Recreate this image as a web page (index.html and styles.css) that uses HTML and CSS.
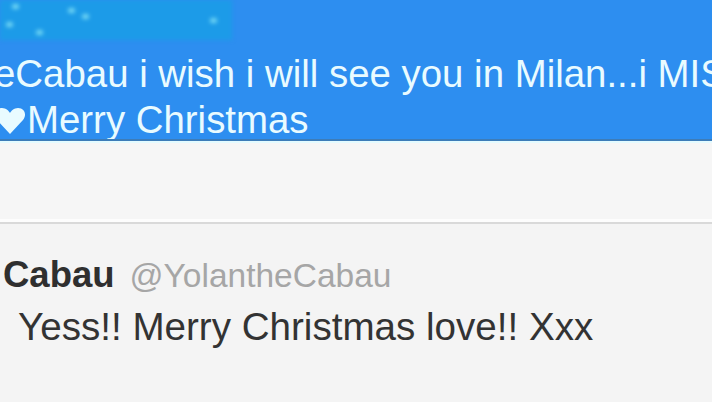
FILE: index.html
```html
<!DOCTYPE html>
<html>
<head>
<meta charset="utf-8">
<link rel="stylesheet" href="styles.css">
</head>
<body>
<div class="page">
  <div class="highlight">
    <div class="scribble">
      <span class="dot d1"></span><span class="dot d2"></span><span class="dot d3"></span>
      <span class="dot d4"></span><span class="dot d5"></span><span class="dot d6"></span>
    </div>
    <div class="hl-text">
      <div class="line l1">eCabau i wish i will see you in Milan...i MISS</div>
      <div class="line l2"><svg class="heart" viewBox="0 0 32 28" width="32" height="28"><path d="M16 27 L3 13 C-1 8 1 1 8 1 C12 1 15 4 16 6 C17 4 20 1 24 1 C31 1 33 8 29 13 Z" fill="#e9fbff"/></svg>Merry Christmas</div>
    </div>
  </div>
  <div class="gap"></div>
  <div class="reply">
    <div class="reply-head"><span class="name">Cabau</span><span class="handle">@YolantheCabau</span></div>
    <div class="reply-text">Yess!! Merry Christmas love!! Xxx</div>
  </div>
</div>
</body>
</html>
```
FILE: styles.css
```css
html, body {
  margin: 0;
  padding: 0;
  width: 712px;
  height: 402px;
  overflow: hidden;
  background: #f4f4f4;
}
.page {
  display: flex;
  flex-direction: column;
  font-family: "Liberation Sans", Arial, sans-serif;
}
.highlight {
  background: #2d8ef0;
  height: 139px;
  border-bottom: 2px solid #3d7cb8;
  box-shadow: 0 2px 0 #e4fbff;
  position: relative;
  overflow: hidden;
}
.scribble {
  position: absolute;
  left: 0;
  top: 0;
  width: 232px;
  height: 40px;
  background: #1c9be8;
  filter: blur(2px);
}
.dot {
  position: absolute;
  width: 7px;
  height: 5px;
  border-radius: 50%;
  background: #7fe0f6;
}
.d1 { left: 12px; top: 4px; }
.d2 { left: 68px; top: 8px; }
.d3 { left: 82px; top: 14px; }
.d4 { left: 6px; top: 22px; }
.d5 { left: 36px; top: 30px; }
.d6 { left: 210px; top: 18px; }
.hl-text {
  padding-top: 51px;
  color: #e9fbff;
  font-size: 38.4px;
  line-height: 46px;
  white-space: nowrap;
}
.line { display: flex; align-items: center; }
.l1 { margin-left: -6px; }
.heart { margin-left: -6px; margin-right: 1px; margin-top: 2px; }
.gap {
  height: 81px;
  background: #f6f6f6;
  border-bottom: 2px solid #d9d9d9;
  box-shadow: 0 -3px 0 #fdfdfd inset;
}
.reply {
  padding-top: 30px;
  background: #f4f4f4;
}
.reply-head {
  display: flex;
  align-items: baseline;
  gap: 15px;
  padding-left: 3px;
  white-space: nowrap;
}
.name {
  font-weight: bold;
  font-size: 36.5px;
  color: #2f2f2f;
}
.handle {
  font-size: 33.5px;
  color: #a6a6a6;
}
.reply-text {
  margin-top: 9px;
  padding-left: 18px;
  font-size: 38.6px;
  color: #333333;
  white-space: nowrap;
}
```
